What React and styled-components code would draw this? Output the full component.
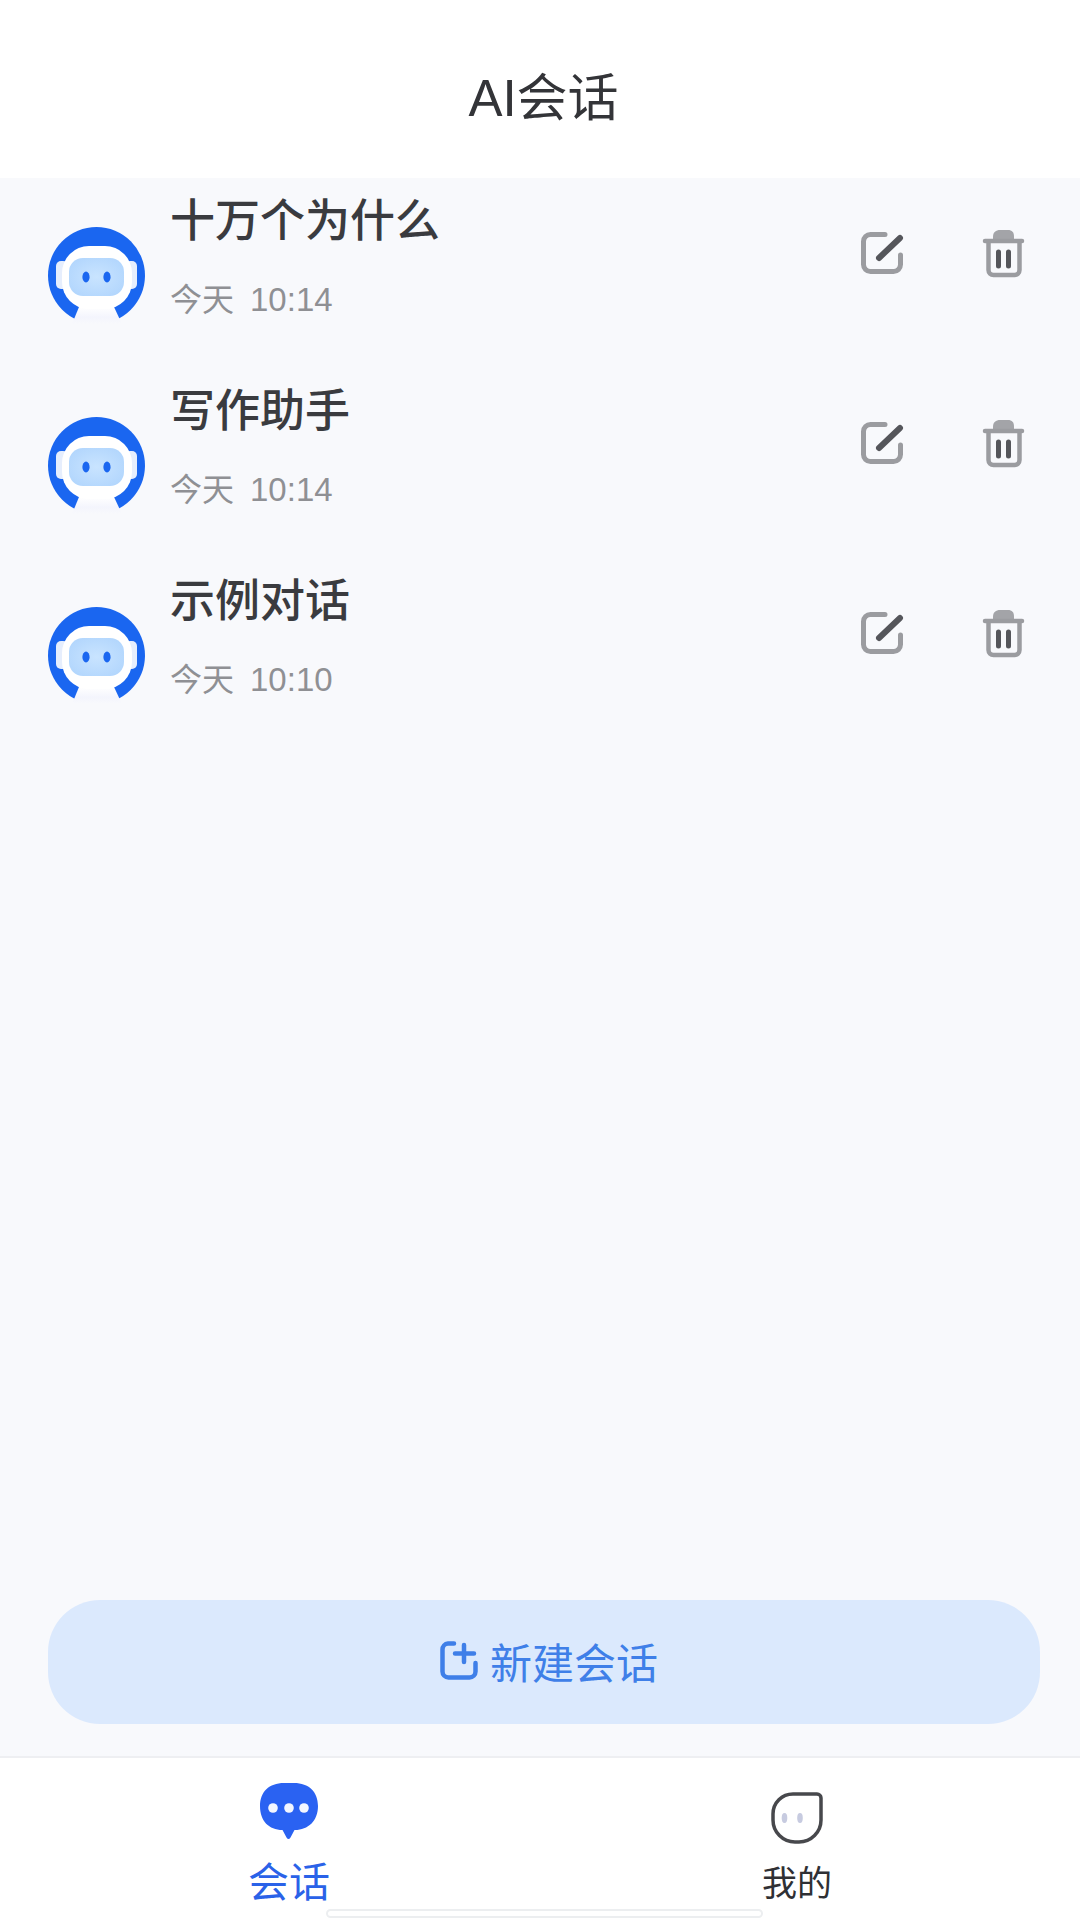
import React from "react";
import styled, { createGlobalStyle } from "styled-components";

const sessions = [
  { id: 1, title: "十万个为什么", time: "10:14" },
  { id: 2, title: "写作助手", time: "10:14" },
  { id: 3, title: "示例对话", time: "10:10" },
];

const RobotAvatar = () => (
  <AvatarSvg viewBox="0 0 97 97">
    <defs>
      <linearGradient id="bodyFade" x1="0" y1="0" x2="0" y2="1">
        <stop offset="0" stopColor="#ffffff" />
        <stop offset="0.6" stopColor="#f4f5fd" />
        <stop offset="1" stopColor="#f8f9fc" />
      </linearGradient>
      <radialGradient id="faceGlow" cx="0.5" cy="0.5" r="0.6">
        <stop offset="0" stopColor="#c9e4ff" />
        <stop offset="1" stopColor="#b2d6fd" />
      </radialGradient>
    </defs>
    <circle cx="48.5" cy="48.5" r="48.5" fill="#1a66f0" />
    <rect x="8" y="34" width="12" height="28" rx="5" fill="#e6eefd" />
    <rect x="77" y="34" width="12" height="28" rx="5" fill="#e6eefd" />
    <path d="M24 97 L31 80 H66 L74 97 Z" fill="url(#bodyFade)" />
    <rect x="14" y="19" width="70" height="63" rx="27" fill="#ffffff" />
    <rect x="21" y="31" width="55" height="38" rx="14" fill="url(#faceGlow)" />
    <ellipse cx="38" cy="50" rx="3.6" ry="5.4" fill="#1a66f0" />
    <ellipse cx="59" cy="50" rx="3.6" ry="5.4" fill="#1a66f0" />
  </AvatarSvg>
);

const EditIcon = () => (
  <ActionSvg viewBox="0 0 46 50">
    <g transform="translate(0 2)">
      <path
        d="M27 3.500 H12.500 A7 7 0 0 0 5.500 10.500 V33.500 A7 7 0 0 0 12.500 40.500 H35.500 A7 7 0 0 0 42.500 33.500 V24"
        fill="none"
        stroke="#9b9ca0"
        strokeWidth="5"
        strokeLinecap="round"
      />
      <path d="M21 27 L42 7" fill="none" stroke="#55565b" strokeWidth="6" strokeLinecap="round" />
    </g>
  </ActionSvg>
);

const TrashIcon = () => (
  <ActionSvg viewBox="0 0 46 50">
    <path d="M14 11 V8 C14 3 17 1 21 1 H29 C33 1 35 3 35 8 V11 Z" fill="#a3a4a8" />
    <path d="M6 12 H43" stroke="#9b9ca0" strokeWidth="4.500" strokeLinecap="round" />
    <path
      d="M9.500 13 V41 A5 5 0 0 0 14.500 46 H35.500 A5 5 0 0 0 40.500 41 V13"
      fill="none"
      stroke="#9b9ca0"
      strokeWidth="4.500"
    />
    <path d="M19.500 23 V37 M29.500 23 V37" stroke="#55565b" strokeWidth="5" strokeLinecap="round" />
  </ActionSvg>
);

const NewChatIcon = () => (
  <svg width="38" height="39" viewBox="0 0 38 39">
    <path
      d="M14 2.500 H8 A6 6 0 0 0 2.500 8.500 V30.500 A6 6 0 0 0 8.500 36.500 H29.500 A6 6 0 0 0 35.500 30.500 V22"
      fill="none"
      stroke="#3f7fe8"
      strokeWidth="4.500"
      strokeLinecap="round"
    />
    <path d="M24 4 V21 M15 12.500 H34" stroke="#3f7fe8" strokeWidth="4.500" strokeLinecap="round" />
  </svg>
);

const ChatIcon = () => (
  <svg width="58" height="57" viewBox="0 0 58 57">
    <path
      d="M24 0 H34 C49 0 58 9 58 23 C58 38 48 47 35 47 H34.500 L30.500 54.500 Q28.500 57.500 26.500 54.500 L22.500 47 C9 47 0 38 0 23 C0 9 9 0 24 0 Z"
      fill="#2a62f2"
    />
    <circle cx="13" cy="25" r="4.800" fill="#f3f6ff" />
    <circle cx="29" cy="25" r="4.800" fill="#f3f6ff" />
    <circle cx="44" cy="25" r="4.800" fill="#f3f6ff" />
  </svg>
);

const MineIcon = () => (
  <svg width="52" height="52" viewBox="0 0 52 52">
    <path
      d="M22 2 H46 A4 4 0 0 1 50 6 V28 A22 22 0 0 1 28 50 H24 A22 22 0 0 1 2 28 V22 A20 20 0 0 1 22 2 Z"
      fill="#ffffff"
      stroke="#47484c"
      strokeWidth="3.500"
    />
    <ellipse cx="13.500" cy="26" rx="2.800" ry="5" fill="#c7cbe0" />
    <ellipse cx="29" cy="26" rx="2.800" ry="5" fill="#c7cbe0" />
  </svg>
);

const App = () => (
  <>
    <GlobalStyle />
    <Page>
      <Header>AI会话</Header>
      <Main>
        <SessionList>
          {sessions.map((s) => (
            <SessionRow key={s.id}>
              <RobotAvatar />
              <SessionText>
                <SessionTitle>{s.title}</SessionTitle>
                <SessionTime>
                  今天<TimeValue>{s.time}</TimeValue>
                </SessionTime>
              </SessionText>
              <Actions>
                <EditIcon />
                <TrashIcon />
              </Actions>
            </SessionRow>
          ))}
        </SessionList>
        <NewButton>
          <NewChatIcon />
          新建会话
        </NewButton>
      </Main>
      <TabBar>
        <Tab>
          <TabIconSlot>
            <ChatIcon />
          </TabIconSlot>
          <TabLabel $active>会话</TabLabel>
        </Tab>
        <Tab>
          <TabIconSlot $low>
            <MineIcon />
          </TabIconSlot>
          <TabLabel>我的</TabLabel>
        </Tab>
        <HomeBar />
      </TabBar>
    </Page>
  </>
);

const GlobalStyle = createGlobalStyle`
  html, body {
    margin: 0;
    padding: 0;
    background: #ffffff;
  }
  * {
    box-sizing: border-box;
  }
  body {
    font-family: "Liberation Sans", "Noto Sans CJK SC", sans-serif;
  }
`;

const Page = styled.div`
  width: 1080px;
  height: 1920px;
  display: flex;
  flex-direction: column;
  overflow: hidden;
`;

const Header = styled.header`
  height: 178px;
  flex-shrink: 0;
  display: flex;
  align-items: center;
  justify-content: center;
  padding: 10px 0 0 7px;
  font-size: 51px;
  color: #333438;
  background: #ffffff;
`;

const Main = styled.main`
  flex: 1;
  display: flex;
  flex-direction: column;
  justify-content: space-between;
  padding: 0 40px 32px 48px;
  background: #f8f9fc;
`;

const SessionList = styled.div`
  display: flex;
  flex-direction: column;
`;

const SessionRow = styled.div`
  height: 190px;
  display: flex;
  align-items: flex-start;
`;

const AvatarSvg = styled.svg`
  width: 97px;
  height: 97px;
  flex-shrink: 0;
  margin-top: 49px;
`;

const SessionText = styled.div`
  flex: 1;
  margin-left: 25px;
  display: flex;
  flex-direction: column;
`;

const SessionTitle = styled.div`
  font-size: 45px;
  font-weight: 500;
  line-height: 60px;
  margin-top: 14px;
  color: #3a3b3f;
`;

const SessionTime = styled.div`
  font-size: 32px;
  line-height: 44px;
  margin-top: 26px;
  color: #8f9094;
`;

const TimeValue = styled.span`
  margin-left: 16px;
  font-size: 33px;
`;

const Actions = styled.div`
  display: flex;
  align-items: center;
  gap: 75px;
  margin-top: 51px;
  margin-right: 15px;
`;

const ActionSvg = styled.svg`
  width: 46px;
  height: 50px;
  flex-shrink: 0;
`;

const NewButton = styled.button`
  width: 992px;
  height: 124px;
  padding: 0 0 4px 10px;
  border: 0;
  border-radius: 52px;
  background: #dbe9fd;
  color: #3f7fe8;
  font-family: inherit;
  font-size: 42px;
  display: flex;
  align-items: center;
  justify-content: center;
  gap: 12px;
`;

const TabBar = styled.nav`
  height: 164px;
  flex-shrink: 0;
  display: grid;
  grid-template-columns: 578px 438px;
  position: relative;
  background: #ffffff;
  border-top: 2px solid #eeeff2;
`;

const Tab = styled.div`
  display: flex;
  flex-direction: column;
  align-items: center;
`;

const TabIconSlot = styled.div`
  height: 78px;
  margin-top: ${(p) => (p.$low ? "34px" : "25px")};
  margin-bottom: ${(p) => (p.$low ? "-10px" : "-2px")};
`;

const TabLabel = styled.div`
  font-size: ${(p) => (p.$active ? "41px" : "35px")};
  line-height: 48px;
  color: ${(p) => (p.$active ? "#2a62e8" : "#2f3034")};
`;

const HomeBar = styled.div`
  position: absolute;
  left: 326px;
  bottom: 2px;
  width: 437px;
  height: 9px;
  border-radius: 5px;
  background: #ffffff;
  border: 2px solid #eceef0;
`;

export default App;
